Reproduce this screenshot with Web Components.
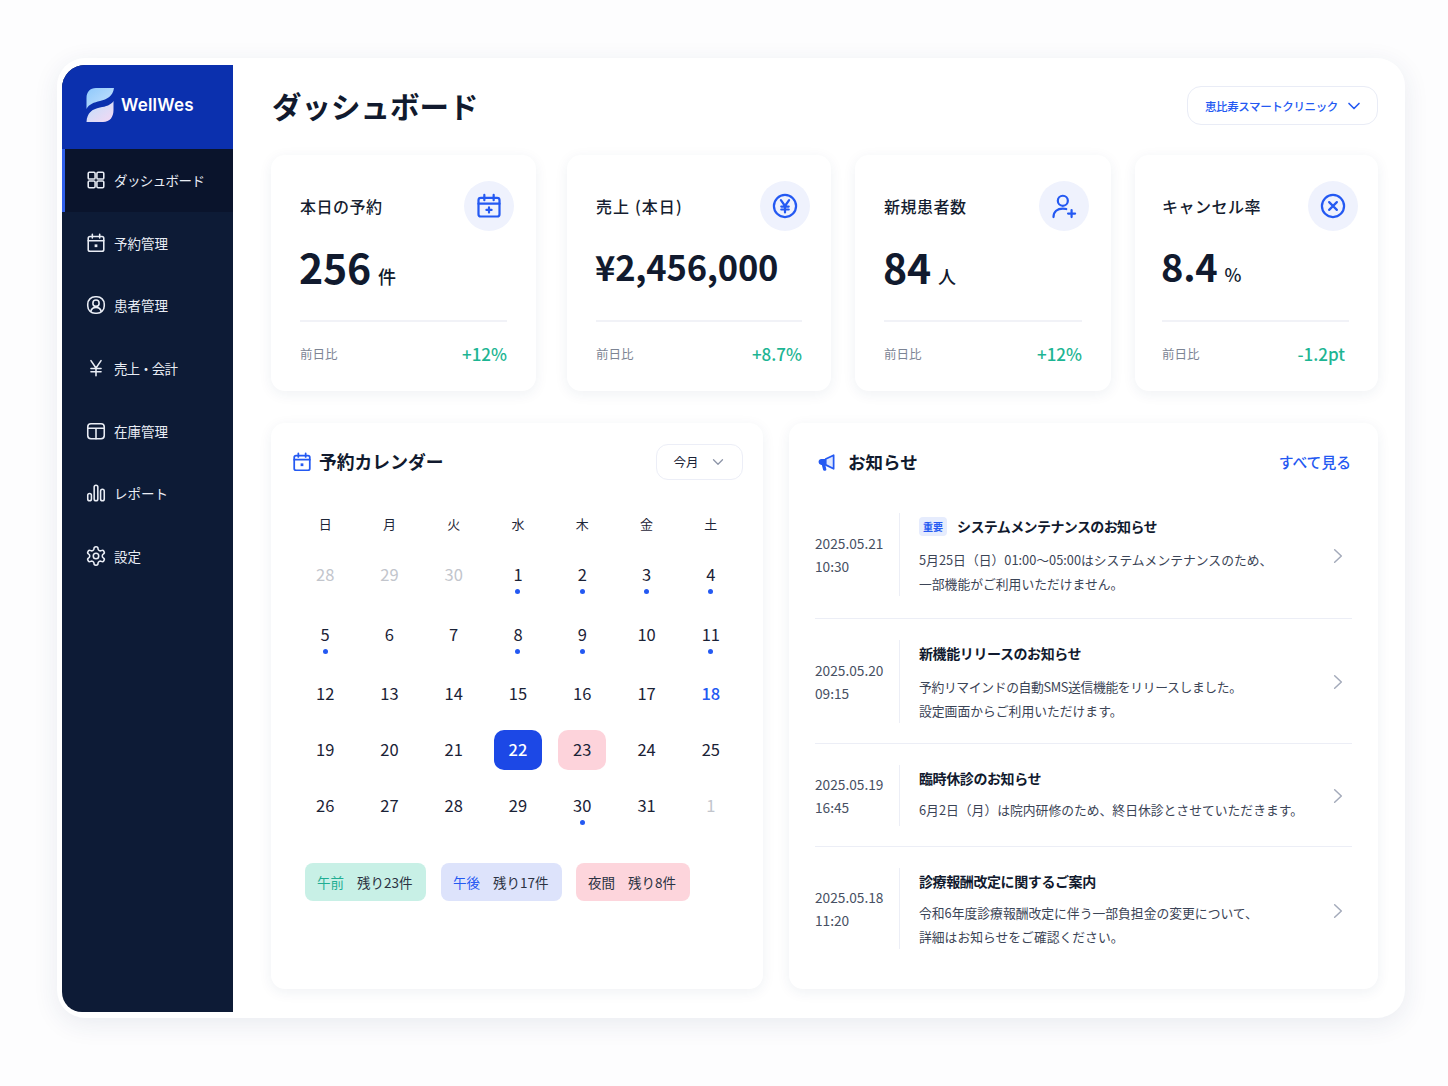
<!DOCTYPE html>
<html lang="ja"><head><meta charset="utf-8"><title>WellWes</title>
<style>
html,body{margin:0;padding:0;background:#fdfdfe}
body{box-sizing:border-box;min-height:1086px;padding:58px 0 68px 57px;font-family:"Noto Sans CJK JP","Noto Sans",sans-serif;color:#111a2e}
</style></head><body>
<app-shell>
  <side-bar slot="side">
    <nav-item icon="grid" active>ダッシュボード</nav-item>
    <nav-item icon="cal">予約管理</nav-item>
    <nav-item icon="user">患者管理</nav-item>
    <nav-item icon="yen" style="letter-spacing:-.9px">売上・会計</nav-item>
    <nav-item icon="box">在庫管理</nav-item>
    <nav-item icon="bars">レポート</nav-item>
    <nav-item icon="gear">設定</nav-item>
  </side-bar>
  <page-head slot="main">ダッシュボード</page-head>
  <stat-row slot="main">
    <stat-card w="265" style="margin-right:7px" label="本日の予約" value="256" size="41" unit="件" delta="+12%" icon="calplus"></stat-card>
    <stat-card w="264" style="--im:-8px;--lls:1.100px" label="売上 (本日)" value="¥2,456,000" size="34.5" delta="+8.7%" icon="yenc"></stat-card>
    <stat-card w="256" label="新規患者数" value="84" size="41" unit="人" delta="+12%" icon="userplus"></stat-card>
    <stat-card w="243" style="--pl:27px;--im:-9px" label="キャンセル率" value="8.4" size="38" unit="%" delta="-1.2pt" icon="xc" tight></stat-card>
  </stat-row>
  <panel-row slot="main">
    <booking-calendar></booking-calendar>
    <notice-panel>
      <notice-row style="--tls:-.6px;--pb:22px;--cm:3px" date="2025.05.21" time="10:30" tag="重要" title="システムメンテナンスのお知らせ">5月25日（日）01:00〜05:00はシステムメンテナンスのため、<br>一部機能がご利用いただけません。</notice-row>
      <notice-row date="2025.05.20" time="09:15" title="新機能リリースのお知らせ"><span style="letter-spacing:-.35px">予約リマインドの自動SMS送信機能をリリースしました。</span><br>設定画面からご利用いただけます。</notice-row>
      <notice-row style="--tg:7px" date="2025.05.19" time="16:45" title="臨時休診のお知らせ">6月2日（月）は院内研修のため、終日休診とさせていただきます。</notice-row>
      <notice-row style="--tg:7px;--cm:4px" date="2025.05.18" time="11:20" title="診療報酬改定に関するご案内" last>令和6年度診療報酬改定に伴う一部負担金の変更について、<br>詳細はお知らせをご確認ください。</notice-row>
    </notice-panel>
  </panel-row>
</app-shell>
<script>
const ICONS={
 grid:'<rect x="3.500" y="3.500" width="7.500" height="7.500" rx="1.300"/><rect x="13" y="3.500" width="7.500" height="7.500" rx="1.300"/><rect x="3.500" y="13" width="7.500" height="7.500" rx="1.300"/><rect x="13" y="13" width="7.500" height="7.500" rx="1.300"/>',
 cal:'<rect x="3.500" y="5" width="17" height="16" rx="2"/><path d="M8 2.500v4M16 2.500v4M3.500 9.500h17"/><rect x="10.500" y="13.500" width="3" height="3" fill="currentColor" stroke="none"/>',
 calplus:'<rect x="3" y="5" width="18" height="16" rx="2"/><path d="M8 2.500v4.500M16 2.500v4.500M3 10h18M12 13.200v4.400M9.800 15.400h4.400"/>',
 user:'<rect x="3" y="3" width="18" height="18" rx="8"/><circle cx="12" cy="10" r="3.400"/><path d="M6.300 19c.8-3 3-4.400 5.700-4.400s4.900 1.400 5.700 4.400"/>',
 yen:'<path d="M6.500 4l5.500 8 5.500-8M12 12v8.500M6.500 12.500h11M6.500 16h11"/>',
 box:'<rect x="3" y="4" width="18" height="16.500" rx="3.500"/><path d="M3 9h18M12 9v11.500"/>',
 bars:'<rect x="3" y="12.500" width="4" height="8" rx="2"/><rect x="10" y="3.500" width="4" height="17" rx="2"/><rect x="17" y="8" width="4" height="12.500" rx="2"/>',
 gear:'<path d="M12.220 2h-.44a2 2 0 0 0-2 2v.18a2 2 0 0 1-1 1.730l-.43.25a2 2 0 0 1-2 0l-.15-.08a2 2 0 0 0-2.730.73l-.22.38a2 2 0 0 0 .73 2.730l.15.1a2 2 0 0 1 1 1.720v.51a2 2 0 0 1-1 1.740l-.15.09a2 2 0 0 0-.73 2.730l.22.38a2 2 0 0 0 2.730.73l.15-.08a2 2 0 0 1 2 0l.43.25a2 2 0 0 1 1 1.730V20a2 2 0 0 0 2 2h.44a2 2 0 0 0 2-2v-.18a2 2 0 0 1 1-1.730l.43-.25a2 2 0 0 1 2 0l.15.08a2 2 0 0 0 2.730-.73l.22-.39a2 2 0 0 0-.73-2.730l-.15-.08a2 2 0 0 1-1-1.740v-.5a2 2 0 0 1 1-1.740l.15-.09a2 2 0 0 0 .73-2.730l-.22-.38a2 2 0 0 0-2.730-.73l-.15.08a2 2 0 0 1-2 0l-.43-.25a2 2 0 0 1-1-1.730V4a2 2 0 0 0-2-2z"/><circle cx="12" cy="12" r="3"/>',
 yenc:'<circle cx="12" cy="12" r="9.500"/><path d="M8.500 7l3.500 5 3.500-5M12 12v5.500M8.800 12.500h6.400M8.800 15h6.400"/>',
 userplus:'<circle cx="11" cy="7.500" r="4.300"/><path d="M3 21.500c0-4.800 3.300-7.300 8-7.300 1 0 2 .1 2.900.4M18.500 15.500v6M15.500 18.500h6"/>',
 xc:'<circle cx="12" cy="12" r="9.500"/><path d="M8.700 8.700l6.600 6.600M15.300 8.700l-6.600 6.600"/>',
 chev:'<path d="M6 9l6 6 6-6"/>',
 right:'<path d="M8 4.500l8 7.500-8 7.500"/>'
};
const svg=(n,s,sw=1.8)=>`<svg width="${s}" height="${s}" viewBox="0 0 24 24" fill="none" stroke="currentColor" stroke-width="${sw}" stroke-linecap="round" stroke-linejoin="round" style="display:block;flex:none">${ICONS[n]}</svg>`;
class Base extends HTMLElement{
  render(html){const r=this.attachShadow({mode:'open'});r.innerHTML=html;return r;}
}
customElements.define('app-shell',class extends Base{connectedCallback(){this.render(`<style>
:host{display:flex;box-sizing:border-box;width:1348px;height:960px;padding:7px 0 6px 5px;background:#fff;border-radius:28px;box-shadow:0 6px 26px rgba(35,50,100,.09)}
.main{flex:1;min-width:0;box-sizing:border-box;padding:21px 27px 23px 38px;display:flex;flex-direction:column}
</style><slot name="side"></slot><div class="main"><slot name="main"></slot></div>`)}});
customElements.define('side-bar',class extends Base{connectedCallback(){this.render(`<style>
:host{display:flex;flex-direction:column;width:171px;flex:none;background:#0d1b36;border-radius:23px 0 0 20px;overflow:hidden}
.brand{height:84px;flex:none;box-sizing:border-box;background:#0b30ae;display:flex;align-items:center;gap:7px;padding:0 0 4px 24px;color:#fff;font:600 17px "Inter","Noto Sans",sans-serif;letter-spacing:.2px}
</style><div class="brand"><svg width="28" height="34" viewBox="86 88 28 34" style="flex:none;display:block"><defs><linearGradient id="a" x1="0" y1="0" x2="1" y2="1"><stop offset="0" stop-color="#8fc9fb"/><stop offset="1" stop-color="#c9e3fd"/></linearGradient><linearGradient id="b" x1="0" y1="0" x2="1" y2="1"><stop offset="0" stop-color="#bfe0fb"/><stop offset="1" stop-color="#f5d8f3"/></linearGradient></defs><path fill="url(#a)" d="M114 88H96C90 88 86.500 92 86.500 98V109C89 104 94 102.500 100 101C107 99.500 113 96 114 88Z"/><path fill="url(#b)" d="M86.500 122H103C110 122 113.500 117 113.500 110V101C111 105 106 106.500 100 107.500C92 109 87 113 86.500 122Z"/></svg><span>WellWes</span></div><slot></slot>`)}});
customElements.define('nav-item',class extends Base{connectedCallback(){const a=this.hasAttribute('active');this.render(`<style>
:host{display:flex;align-items:center;gap:7.400px;height:62.600px;box-sizing:border-box;padding-left:${a?19.600:22.600}px;color:#e9edf5;font-size:13.500px;${a?'background:#0a142c;border-left:3px solid #2f5fea;letter-spacing:-.6px;':''}}
</style>${svg(this.getAttribute('icon'),22,1.700)}<span><slot></slot></span>`)}});
customElements.define('page-head',class extends Base{connectedCallback(){this.render(`<style>
:host{display:flex;align-items:center;justify-content:space-between;height:39px;flex:none;margin-bottom:30px}
h1{margin:0;font-size:29.500px;font-weight:700;color:#111a2e;line-height:39px;padding-left:1px}
.sel{box-sizing:border-box;width:191px;height:39px;border:1.500px solid #e9ecf6;border-radius:14px;display:flex;align-items:center;gap:6px;padding-left:17px;color:#2459f2;font-size:11.500px;font-weight:500;letter-spacing:-.4px;white-space:nowrap}
</style><h1><slot></slot></h1><div class="sel"><span>恵比寿スマートクリニック</span>${svg('chev',20,2)}</div>`)}});
customElements.define('stat-row',class extends Base{connectedCallback(){this.render(`<style>:host{display:flex;gap:24px;height:236px;flex:none;margin-bottom:32px}</style><slot></slot>`)}});
customElements.define('stat-card',class extends Base{connectedCallback(){const g=k=>this.getAttribute(k)||'';const size=g('size')||42;const tight=this.hasAttribute('tight');this.render(`<style>
:host{display:flex;flex-direction:column;box-sizing:border-box;width:${g('w')}px;flex:none;height:236px;padding:26px 29px 0 var(--pl,29px);background:#fff;border-radius:14px;box-shadow:0 3px 14px rgba(35,50,100,.07)}
.head{display:flex;justify-content:space-between;align-items:center;height:50px;margin-right:var(--im,-7px)}
.label{font-size:16px;font-weight:500;color:#151d30;letter-spacing:var(--lls,.5px);white-space:pre}
.ic{width:50px;height:50px;border-radius:50%;background:#eff2fd;color:#2459f2;display:flex;align-items:center;justify-content:center}
.val{display:flex;align-items:baseline;gap:7px;height:50px;line-height:50px;margin:10px 0 0 -1px;font-size:${size}px;font-weight:700;color:#111a2e;white-space:nowrap;letter-spacing:-.2px}
.u{font-size:18px;font-weight:500}
.line{height:2px;background:#f1f2f7;margin-top:29px}
.foot{display:flex;justify-content:space-between;align-items:center;height:24px;margin-top:19px}
.foot span:first-child{font-size:12.500px;color:#7c8494}
.d{font-size:17px;font-weight:500;color:#1db593;${tight?'margin-right:4px;':''}}
</style><div class="head"><span class="label">${g('label')}</span><div class="ic">${svg(g('icon'),28,1.900)}</div></div>
<div class="val"><span>${g('value')}</span>${g('unit')?`<span class="u">${g('unit')}</span>`:''}</div>
<div class="line"></div><div class="foot"><span>前日比</span><span class="d">${g('delta')}</span></div>`)}});
customElements.define('panel-row',class extends Base{connectedCallback(){this.render(`<style>:host{display:flex;gap:26px;flex:1;min-height:0}</style><slot></slot>`)}});
customElements.define('booking-calendar',class extends Base{connectedCallback(){
 const wk=['日','月','火','水','木','金','土'];
 const days=[['28','m'],['29','m'],['30','m'],['1','d'],['2','d'],['3','d'],['4','d'],['5','d'],['6'],['7'],['8','d'],['9','d'],['10'],['11','d'],['12'],['13'],['14'],['15'],['16'],['17'],['18','b'],['19'],['20'],['21'],['22','t'],['23','p'],['24'],['25'],['26'],['27'],['28'],['29'],['30','d'],['31'],['1','m']];
 this.render(`<style>
:host{display:block;box-sizing:border-box;width:492px;flex:none;padding:21px 20px 0 22px;background:#fff;border-radius:14px;box-shadow:0 3px 14px rgba(35,50,100,.07)}
.head{display:flex;align-items:center;height:36px;color:#2459f2;margin-left:-2.300px}
.head>svg{margin-bottom:1px}
h2{margin:0 0 2px 6.300px;font-size:17.800px;font-weight:700;color:#111a2e;flex:1}
.sel{box-sizing:border-box;width:87px;height:36px;border:1.500px solid #eceef7;border-radius:12px;display:flex;align-items:center;justify-content:center;gap:10px;padding-left:1px;font-size:12.500px;color:#1a2236}
.sel span{padding-bottom:2px}
.sel svg{color:#8d95a8}
.g{display:grid;grid-template-columns:repeat(7,1fr);justify-items:center}
.wk{margin-top:35px;height:20px;font-size:13px;line-height:18px;color:#1e2638}
.days{margin-top:20px;grid-template-rows:60px 59px 56px 56px 40px}
.c{position:relative;box-sizing:border-box;width:48px;height:40px;padding-bottom:2px;display:flex;align-items:center;justify-content:center;font-size:16.500px;color:#1a2236;border-radius:10px}
.m{color:#c2c5cc}.b{color:#2459f2;font-weight:500}
.t{background:#1c48e6;color:#fff;font-weight:500}
.p{background:#fdd3db}
.d::after{content:"";position:absolute;left:21.500px;top:33.500px;width:5px;height:5px;border-radius:50%;background:#2459f2}
.chips{display:flex;margin:37px 0 0 12px;gap:15px}
.chip{height:38px;box-sizing:border-box;padding:0 12px;border-radius:8px;display:flex;align-items:center;gap:13px;font-size:13.500px;color:#2b3242;white-space:nowrap}
.chip.x{margin-left:-1px}
</style><div class="head">${svg('cal',22,1.900)}<h2>予約カレンダー</h2><div class="sel"><span>今月</span>${svg('chev',18,1.700)}</div></div>
<div class="g wk">${wk.map(w=>`<span>${w}</span>`).join('')}</div>
<div class="g days">${days.map(([n,k])=>`<div class="c ${k||''}">${n}</div>`).join('')}</div>
<div class="chips"><div class="chip" style="background:#c8f0e6;width:121px"><span style="color:#1fae93">午前</span><span>残り23件</span></div><div class="chip" style="background:#dde3fb;width:121px"><span style="color:#2459f2">午後</span><span>残り17件</span></div><div class="chip x" style="background:#fdd5dc;width:114px"><span>夜間</span><span>残り8件</span></div></div>`)}});
customElements.define('notice-panel',class extends Base{connectedCallback(){this.render(`<style>
:host{display:block;box-sizing:border-box;flex:1;min-width:0;padding:21px 26px 0 26px;background:#fff;border-radius:14px;box-shadow:0 3px 14px rgba(35,50,100,.07)}
.head{display:flex;align-items:center;height:36px;margin-bottom:12px;padding-left:2px}
h2{margin:0 0 2px 12px;font-size:17.500px;font-weight:700;color:#111a2e;flex:1}
a{font-size:14.800px;font-weight:500;color:#2459f2;padding:0 1px 2px 0}
</style><div class="head"><svg width="19" height="19" viewBox="0 0 24 24" style="flex:none;display:block"><path fill="#2459f2" d="M11 7.500H5.500C3.500 7.500 2 9 2 11.200s1.500 3.800 3.500 3.800h.6l1.600 6.200c.2.700.8 1.100 1.500 1.100h1.300c.9 0 1.500-.8 1.300-1.700L10.500 15h.5z"/><path fill="#dfe7fe" stroke="#2459f2" stroke-width="2.200" stroke-linejoin="round" d="M11 7.500L21 2.800v17.200L11 15z"/></svg><h2>お知らせ</h2><a>すべて見る</a></div><slot></slot>`)}});
customElements.define('notice-row',class extends Base{connectedCallback(){const g=k=>this.getAttribute(k)||'';const last=this.hasAttribute('last');this.render(`<style>
:host{display:flex;align-items:center;box-sizing:border-box;padding:21px 0 var(--pb,20px);${last?'':'border-bottom:1px solid #eceef6;'}}
.dt{width:84px;flex:none;font-size:13.700px;line-height:22.500px;color:#475063}
.body{flex:1;min-width:0;min-height:61px;box-sizing:border-box;border-left:1px solid #eceef6;padding-left:19px}
.t{display:flex;align-items:center;gap:10px;height:26px;margin-bottom:var(--tg,9px);font-size:14px;font-weight:700;color:#111a2e;letter-spacing:var(--tls,-.4px)}
.tag{width:28px;height:19px;border-radius:4px;background:#e6ecfd;color:#2459f2;font-size:10px;font-weight:700;display:flex;align-items:center;justify-content:center;letter-spacing:0}
.b{font-size:12.800px;line-height:24px;color:#3b4456;white-space:nowrap}
.ch{flex:none;color:#a3aaba;padding:var(--cm,0) 4px 0 0}
</style><div class="dt">${g('date')}<br>${g('time')}</div><div class="body"><div class="t">${g('tag')?`<span class="tag">${g('tag')}</span>`:''}<span>${g('title')}</span></div><div class="b"><slot></slot></div></div><div class="ch">${svg('right',20,1.800)}</div>`)}});
</script>
</body></html>
